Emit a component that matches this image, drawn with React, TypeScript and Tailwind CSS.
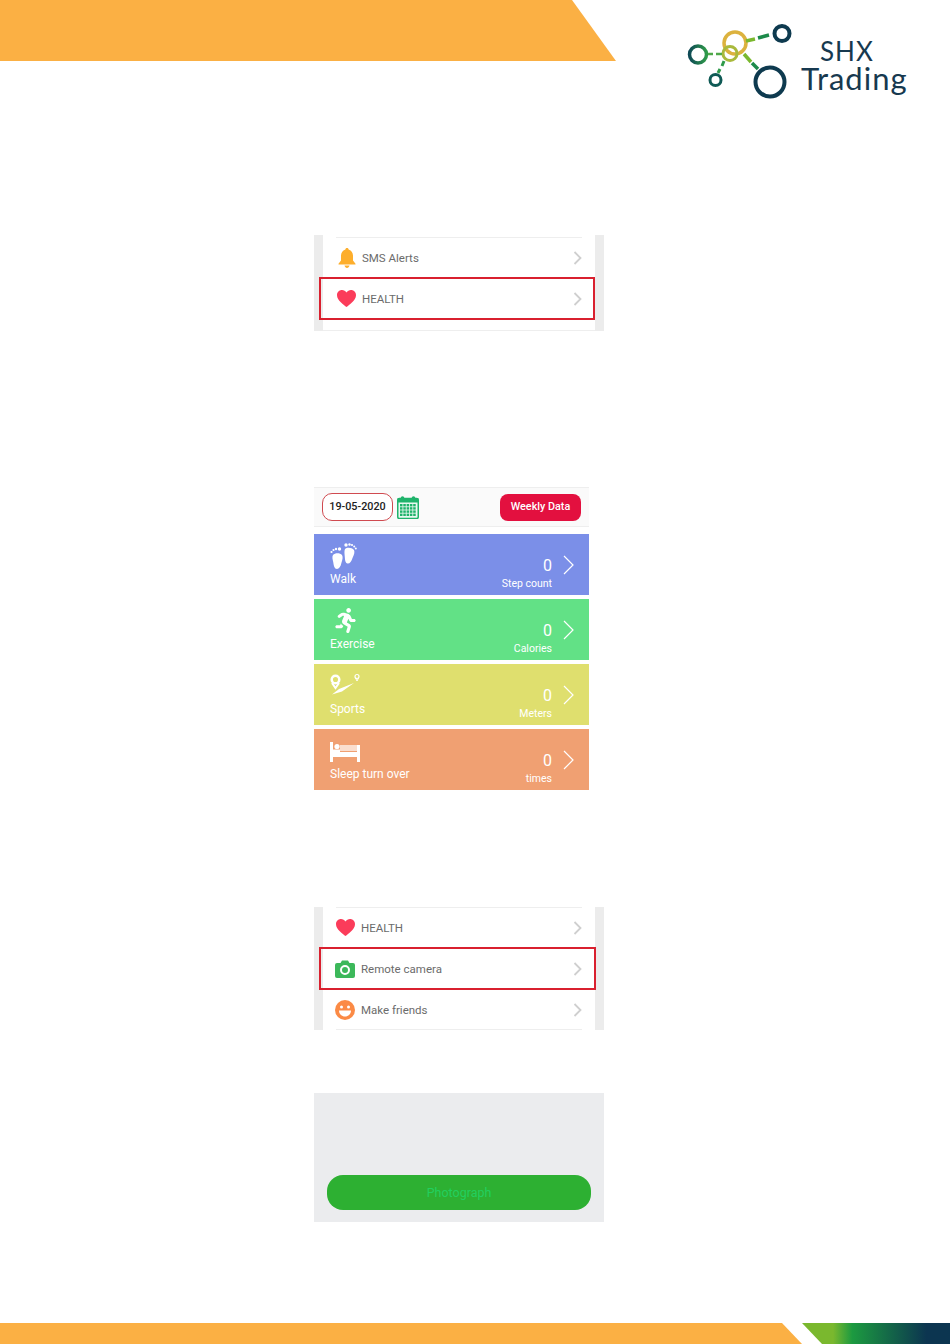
import { FaRunning } from "react-icons/fa";

// ── Icons ──────────────────────────────────────

function Logo() {
  return (
    <svg width="116" height="82" viewBox="686 20 116 82" fill="none">
      <defs>
        <linearGradient id="leftRing" x1="0" y1="0" x2="1" y2="0">
          <stop offset="0" stopColor="#0e4a55" />
          <stop offset="1" stopColor="#2f9a4a" />
        </linearGradient>
      </defs>
      <circle cx="698" cy="54.500" r="8.500" stroke="url(#leftRing)" strokeWidth="3.500" />
      <circle cx="715.500" cy="80" r="5.500" stroke="#0f5a55" strokeWidth="3" />
      <circle cx="782" cy="33.500" r="7.500" stroke="#0e3a4f" strokeWidth="4" />
      <circle cx="770" cy="82" r="14.500" stroke="#0e3a4f" strokeWidth="4" />
      <circle cx="735" cy="43" r="11" stroke="#dcb23e" strokeWidth="3.500" />
      <circle cx="730" cy="53.500" r="7" stroke="#a9b93c" strokeWidth="3" />
      <path d="M708 54h5M716 54h6" stroke="#4fa84a" strokeWidth="2.500" />
      <path d="M724 61l-2 5M720 69l-2 4" stroke="#2f9a4a" strokeWidth="3" />
      <path d="M746 41l9-2" stroke="#7ab82e" strokeWidth="3.500" />
      <path d="M758 38l11-3" stroke="#1c8a4a" strokeWidth="3.500" />
      <path d="M744 54l7 8" stroke="#7ab82e" strokeWidth="3.500" />
      <path d="M752 63l6 6" stroke="#1c8a4a" strokeWidth="3.500" />
    </svg>
  );
}

function Chevron() {
  return (
    <svg width="9" height="14" viewBox="0 0 9 14" fill="none" stroke="#cfcfcf" strokeWidth="1.800">
      <path d="M1.500 1l6 6-6 6" />
    </svg>
  );
}

function BellIcon() {
  return (
    <svg width="18" height="20" viewBox="0 0 18 20" fill="#fdae2c">
      <path d="M9 0c1 0 1.600.7 1.600 1.600C13.600 2.400 15 5 15 8v4.500l2.500 3.300v.7H.5v-.7L3 12.500V8c0-3 1.400-5.600 4.400-6.400C7.400.7 8 0 9 0z" />
      <path d="M6.500 17.500h5C11.200 19 10.200 20 9 20s-2.200-1-2.500-2.500z" />
    </svg>
  );
}

function HeartIcon() {
  return (
    <svg width="19" height="17" viewBox="0 0 19 17" fill="#fb3c5a">
      <path d="M9.500 17C7 14.800 0 10.500 0 5.200 0 2.200 2.200 0 5 0c1.900 0 3.500 1 4.500 2.600C10.500 1 12.100 0 14 0c2.800 0 5 2.200 5 5.200 0 5.300-7 9.600-9.500 11.800z" />
    </svg>
  );
}

function CameraIcon() {
  return (
    <svg width="20" height="18" viewBox="0 0 20 18">
      <path
        fill="#3cb85a"
        d="M2 3h3.500L7 .5h6L14.500 3H18a2 2 0 0 1 2 2v11a2 2 0 0 1-2 2H2a2 2 0 0 1-2-2V5a2 2 0 0 1 2-2z"
      />
      <circle cx="10" cy="10" r="4" fill="none" stroke="#fff" strokeWidth="2" />
    </svg>
  );
}

function SmileIcon() {
  return (
    <svg width="20" height="20" viewBox="0 0 20 20">
      <circle cx="10" cy="10" r="10" fill="#fb8a45" />
      <circle cx="6.500" cy="7" r="1.500" fill="#fff" />
      <circle cx="13.500" cy="7" r="1.500" fill="#fff" />
      <path d="M4 10.500h12c0 3.500-2.700 6-6 6s-6-2.500-6-6z" fill="#fff" />
    </svg>
  );
}

function CalendarIcon() {
  const cells = [];
  for (let row = 0; row < 4; row++) {
    for (let col = 0; col < 5; col++) {
      cells.push(<rect key={`${row}-${col}`} x={3 + col * 3.3} y={8 + row * 3.200} width="2.500" height="2.400" fill="#1fb36b" />);
    }
  }
  return (
    <svg width="22" height="23" viewBox="0 0 22 23">
      <rect x="0.750" y="2.500" width="20.500" height="20" rx="1.500" fill="#e9f8f0" stroke="#1fb36b" strokeWidth="1.500" />
      <rect x="0.500" y="2.500" width="21" height="4" fill="#1fb36b" />
      <circle cx="5.500" cy="2" r="1.800" fill="#1fb36b" />
      <circle cx="16.500" cy="2" r="1.800" fill="#1fb36b" />
      {cells}
    </svg>
  );
}

function FeetIcon() {
  return (
    <svg width="27" height="26" viewBox="0 0 27 26" fill="#fff">
      <path d="M3 12c2-2.500 7-2.500 9 0 1.300 2 .3 5-.6 8-.7 3.500-2.400 6-4.400 6-2.500 0-3.200-3-3.700-6.500C2.700 16.500 1.800 14 3 12z" />
      <path d="M15 6c2-2 7-1.500 9 1 1 2 0 5-1.500 8-1 3.500-3 6-5 5.500-2.200-.5-2.500-3.500-2.700-6.500C14.600 11 14 8 15 6z" />
      <circle cx="1.500" cy="9" r="1.100" />
      <circle cx="3.500" cy="7" r="1.100" />
      <circle cx="6" cy="6" r="1.200" />
      <circle cx="9.500" cy="6" r="1.700" />
      <circle cx="16" cy="2" r="1.700" />
      <circle cx="19.500" cy="1.500" r="1.200" />
      <circle cx="22" cy="2" r="1.100" />
      <circle cx="24.200" cy="3.500" r="1" />
      <circle cx="25.800" cy="5.500" r="1" />
    </svg>
  );
}

function RouteIcon() {
  return (
    <svg width="32" height="24" viewBox="0 0 32 24" fill="none" stroke="#fff">
      <circle cx="5.500" cy="6.500" r="3.800" strokeWidth="2.500" />
      <path d="M2 10l3.500 5 3.500-5" strokeWidth="2" />
      <path d="M2 21.500L9 16l15-6-12 8.500z" fill="#fff" stroke="none" />
      <circle cx="27" cy="3.500" r="2" strokeWidth="1.200" />
      <path d="M25.500 5l1.500 3 1.500-3" strokeWidth="1" />
    </svg>
  );
}

function BedIcon() {
  return (
    <svg width="30" height="20" viewBox="0 0 30 20" fill="#fff">
      <rect x="0" y="0" width="3" height="20" />
      <rect x="27" y="3" width="3" height="17" />
      <rect x="3" y="10" width="24" height="5" />
      <circle cx="7" cy="4.500" r="2.600" />
      <rect x="10" y="3" width="17" height="6" opacity="0.650" />
      <rect x="3" y="7.500" width="7" height="2.500" />
    </svg>
  );
}

function CardChevron() {
  return (
    <svg width="11" height="20" viewBox="0 0 11 20" fill="none" stroke="#fff" strokeWidth="1.200">
      <path d="M1 1l9 9-9 9" />
    </svg>
  );
}

// ── Pieces ─────────────────────────────────────

function MenuRow({ icon, label, iconBox }: { icon: React.ReactNode; label: string; iconBox: string }) {
  return (
    <div className="flex h-[39px] items-center px-[13px]">
      <div className={`flex ${iconBox}`}>{icon}</div>
      <span className="pt-[2px] text-[11.500px] text-[#6b6b6b]">{label}</span>
      <div className="ml-auto">
        <Chevron />
      </div>
    </div>
  );
}

const cards = [
  { label: "Walk", caption: "Step count", bg: "bg-[#7b8fe8]", icon: <FeetIcon /> },
  { label: "Exercise", caption: "Calories", bg: "bg-[#62e186]", icon: <FaRunning className="ml-[3px] text-[25px] text-white" /> },
  { label: "Sports", caption: "Meters", bg: "bg-[#dfdf6e]", icon: <RouteIcon /> },
  { label: "Sleep turn over", caption: "times", bg: "bg-[#f0a072]", icon: <div className="pt-[4px]"><BedIcon /></div> },
];

export default function App() {
  return (
    <div className="flex h-[1344px] w-[950px] flex-col overflow-hidden bg-white font-['Roboto',sans-serif]">
      {/* Header */}
      <div className="flex h-[100px] shrink-0">
        <div className="h-[61px] w-[616px] bg-[#fbb044] [clip-path:polygon(0_0,572px_0,100%_100%,0_100%)]" />
        <div className="ml-[70px] mt-[20px]">
          <Logo />
        </div>
        <div className="ml-[-1px] mt-[37px] flex flex-col font-['Lato',sans-serif] text-[#17394f]">
          <span className="ml-[19px] text-[26px] leading-[28px] tracking-[1px]">SHX</span>
          <span className="text-[31px] leading-[26px] tracking-[1px]">Trading</span>
        </div>
      </div>

      {/* SMS / Health menu */}
      <div className="ml-[314px] mt-[135px] h-[96px] w-[290px] shrink-0 bg-[#ececec] px-[9px]">
        <div className="flex h-full flex-col bg-white">
          <div className="mx-[13px] mt-[2px] h-px shrink-0 bg-[#eee]" />
          <MenuRow icon={<BellIcon />} label="SMS Alerts" iconBox="w-[26px] pl-[2px]" />
          <div className="ml-[-4px] border-2 border-[#d9202f]">
            <div className="mr-[-2px] pl-[2px]">
              <MenuRow icon={<HeartIcon />} label="HEALTH" iconBox="w-[26px] pl-[1px]" />
            </div>
          </div>
          <div className="mt-auto h-px shrink-0 bg-[#eee]" />
        </div>
      </div>

      {/* Health data */}
      <div className="ml-[314px] mt-[156px] w-[275px] shrink-0">
        <div className="flex h-[40px] items-center border-y border-[#eee] bg-[#fafafa] px-[8px]">
          <div className="flex h-[28px] w-[71px] items-center justify-center rounded-[10px] border border-[#d04a50] bg-white text-[10.800px] font-medium text-[#222]">
            19-05-2020
          </div>
          <div className="ml-[4px]">
            <CalendarIcon />
          </div>
          <div className="ml-auto flex h-[27px] w-[81px] items-center justify-center rounded-[8px] bg-[#e3103f] text-[10.800px] font-medium text-white">
            Weekly Data
          </div>
        </div>
        <div className="mt-[7px] flex flex-col gap-[4px]">
          {cards.map((card) => (
            <div key={card.label} className={`flex h-[61px] items-stretch pl-[16px] pr-[15px] text-white ${card.bg}`}>
              <div className="flex flex-col">
                <div className="mt-[9px] h-[27px]">{card.icon}</div>
                <span className="mt-[1px] text-[12px] leading-[16px]">{card.label}</span>
              </div>
              <div className="ml-auto mr-[11px] flex flex-col items-end">
                <span className="mt-[22px] text-[16px] leading-[20px]">0</span>
                <span className="text-[10.500px] leading-[15px]">{card.caption}</span>
              </div>
              <div className="flex items-center">
                <CardChevron />
              </div>
            </div>
          ))}
        </div>
      </div>

      {/* Remote camera menu */}
      <div className="ml-[314px] mt-[117px] h-[123px] w-[290px] shrink-0 bg-[#ececec] px-[9px]">
        <div className="flex h-full flex-col bg-white">
          <div className="mx-[13px] h-px shrink-0 bg-[#eee]" />
          <MenuRow icon={<HeartIcon />} label="HEALTH" iconBox="w-[25px]" />
          <div className="ml-[-4px] mr-[-1px] border-2 border-[#d9202f]">
            <div className="mr-[-1px] pl-[2px]">
              <MenuRow icon={<CameraIcon />} label="Remote camera" iconBox="ml-[-1px] w-[26px]" />
            </div>
          </div>
          <MenuRow icon={<SmileIcon />} label="Make friends" iconBox="ml-[-1px] w-[26px]" />
          <div className="mx-[13px] h-px shrink-0 bg-[#eee]" />
        </div>
      </div>

      {/* Photograph */}
      <div className="ml-[314px] mt-[63px] flex h-[129px] w-[290px] shrink-0 flex-col justify-end bg-[#ebecee] px-[13px] pb-[12px]">
        <div className="flex h-[35px] items-center justify-center rounded-[16px] bg-[#2db032] pt-[2px] text-[12.500px] text-[#22cf5f]">
          Photograph
        </div>
      </div>

      {/* Footer */}
      <div className="mt-[101px] flex h-[21px] shrink-0">
        <div className="w-[802px] bg-[#fbb044] [clip-path:polygon(0_0,782px_0,100%_100%,0_100%)]" />
        <div className="w-[148px] bg-[linear-gradient(90deg,#7ab82e_21%,#1c9a40_34%,#0c3550_84%)] [clip-path:polygon(0_0,100%_0,100%_100%,20px_100%)]" />
      </div>
    </div>
  );
}
